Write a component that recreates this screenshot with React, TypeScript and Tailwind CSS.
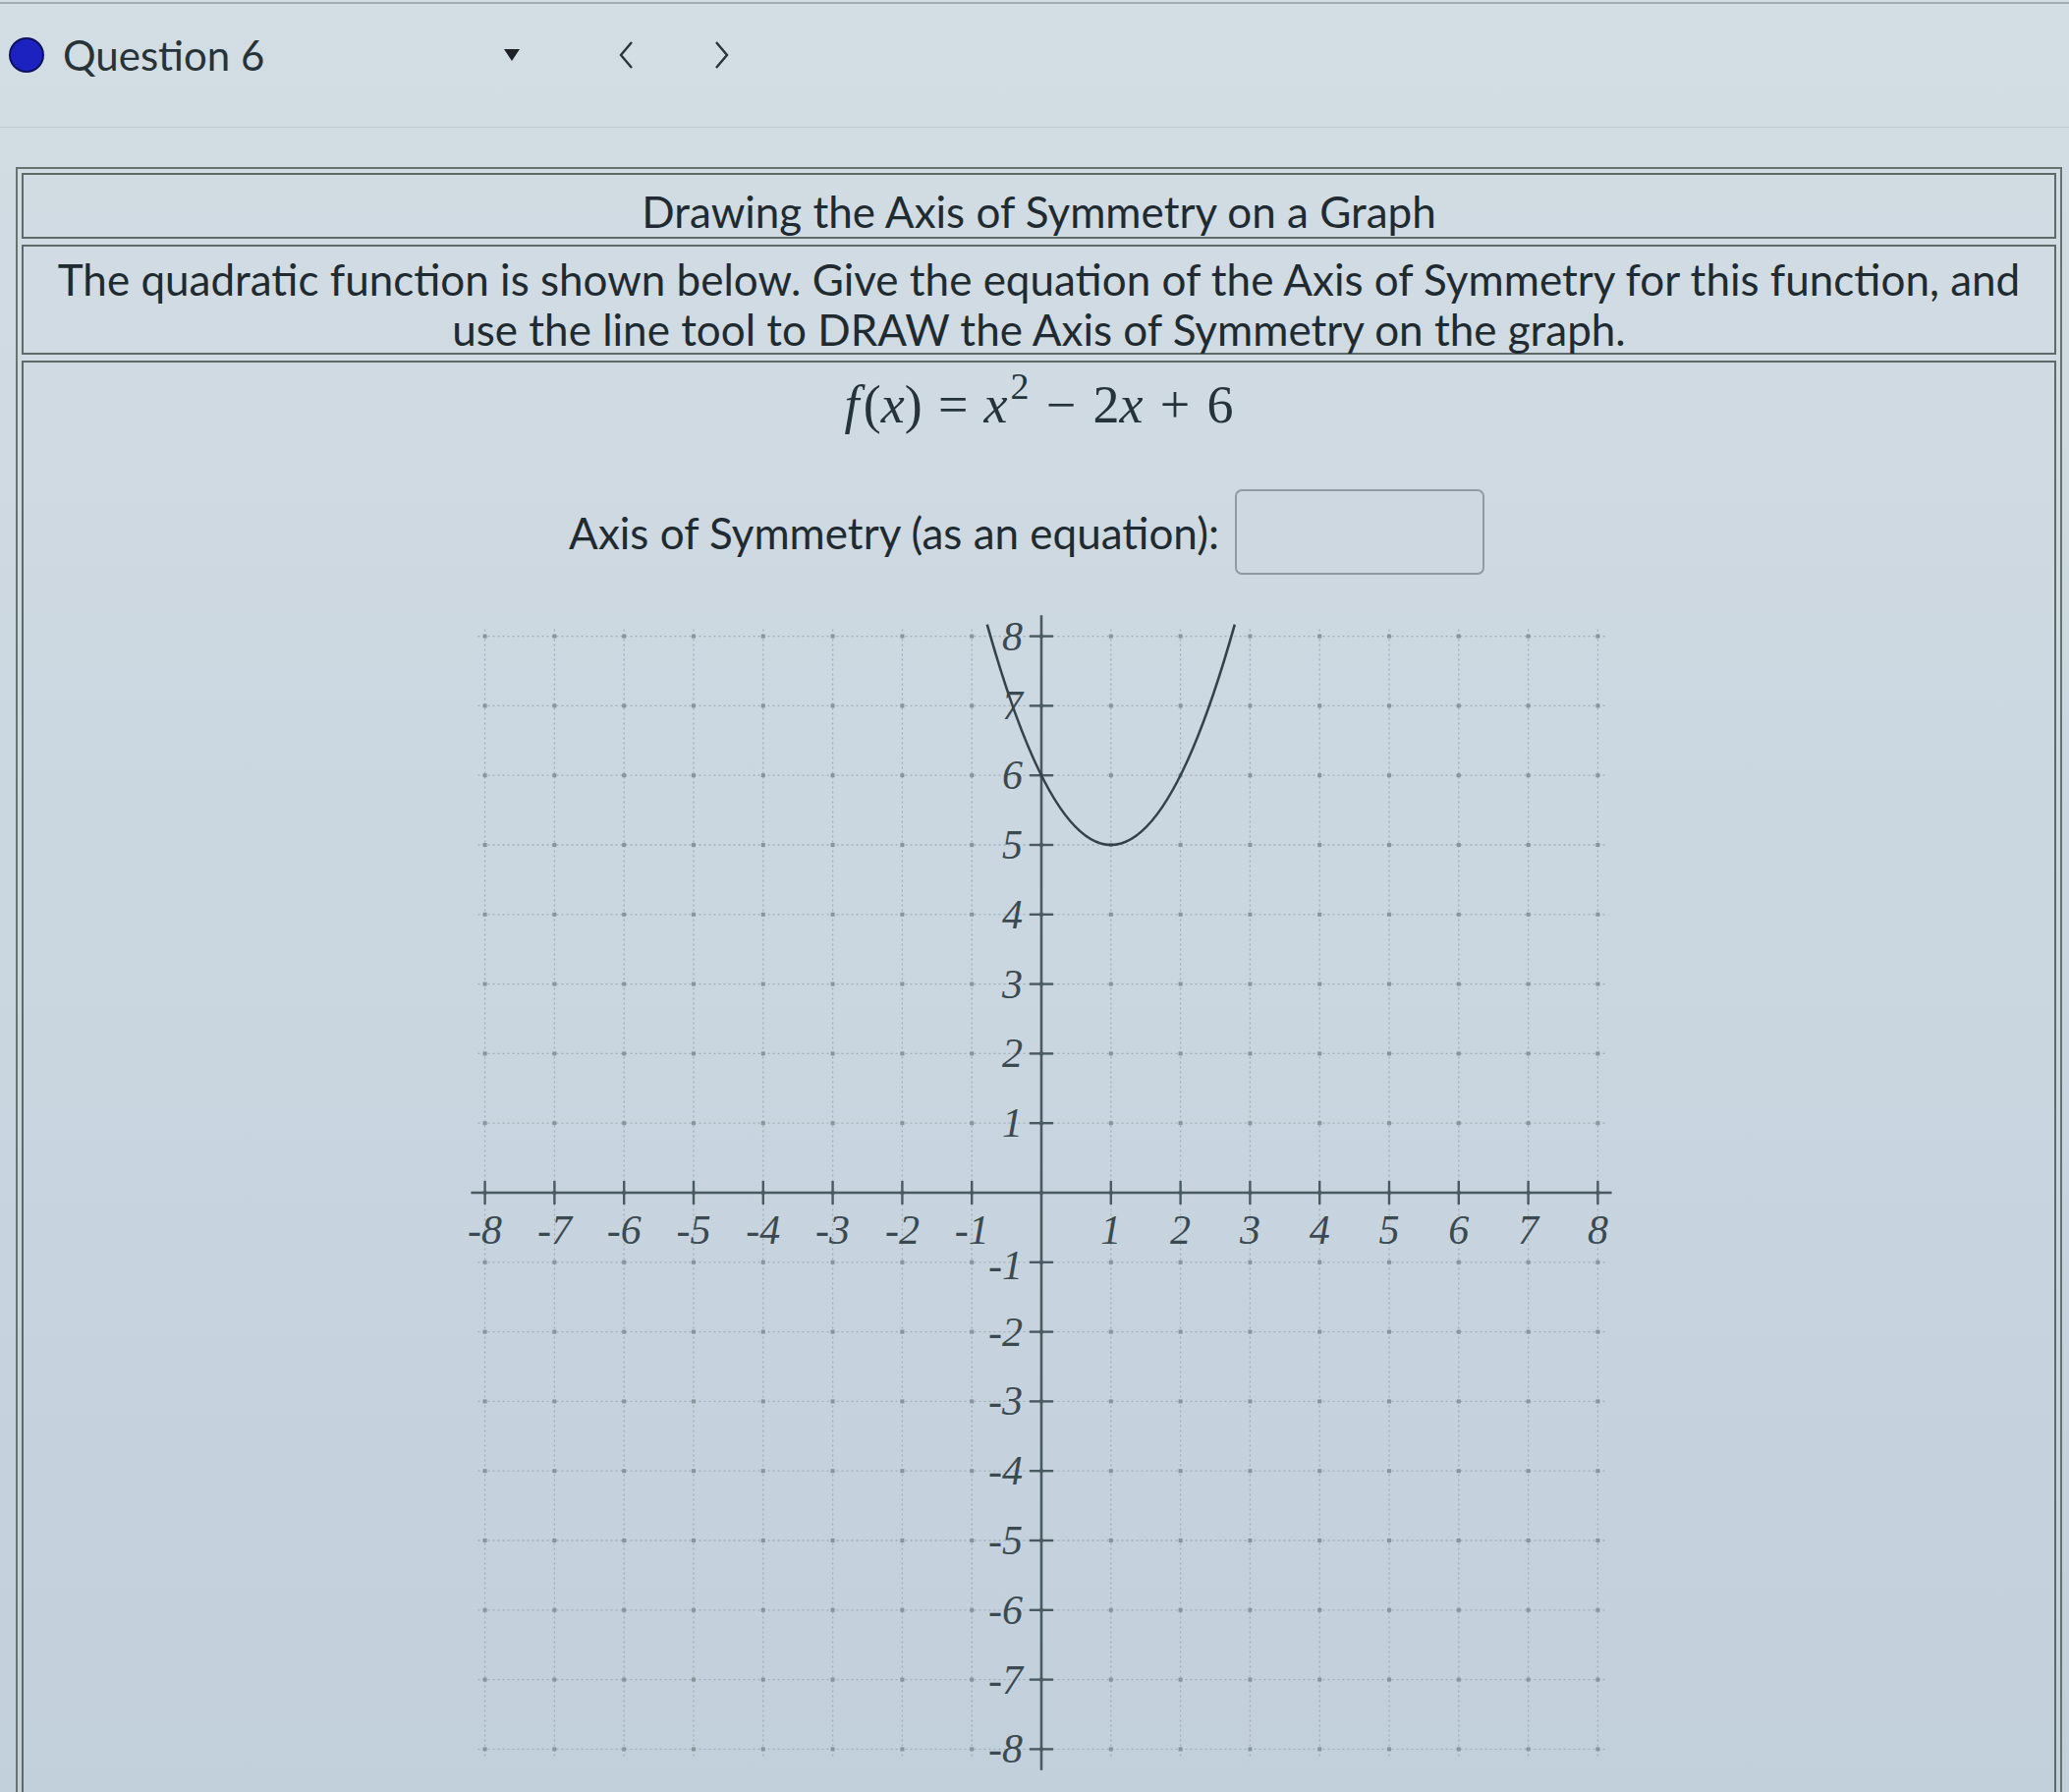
import React from "react";

// graph geometry: viewport is roughly -8.2..8.2 on both axes
const UNIT = 70.8;
const SIZE = 1240;
const O = SIZE / 2;
const sx = (x: number) => O + x * UNIT;
const sy = (y: number) => O - y * UNIT;
const f = (x: number) => x * x - 2 * x + 6;

const TICKS = [-8, -7, -6, -5, -4, -3, -2, -1, 1, 2, 3, 4, 5, 6, 7, 8];
const GRID = [-8, -7, -6, -5, -4, -3, -2, -1, 0, 1, 2, 3, 4, 5, 6, 7, 8];
const SERIF = "'Liberation Serif', 'DejaVu Serif', serif";

function Parabola() {
  // exact quadratic bezier through the clipped ends
  const x0 = -0.78;
  const x2 = 2.78;
  const x1 = (x0 + x2) / 2;
  const y1 = f(x0) + (2 * x0 - 2) * (x1 - x0);
  const d = `M ${sx(x0)} ${sy(f(x0))} Q ${sx(x1)} ${sy(y1)} ${sx(x2)} ${sy(f(x2))}`;
  return <path d={d} fill="none" stroke="#34434a" strokeWidth={2.6} />;
}

function Graph() {
  const lo = -8.1;
  const hi = 8.1;
  return (
    <svg width={SIZE} height={SIZE} viewBox={`0 0 ${SIZE} ${SIZE}`} className="block">
      {GRID.map((g) => (
        <g key={"g" + g}>
          <line x1={sx(g)} y1={sy(hi)} x2={sx(g)} y2={sy(lo)} stroke="#a3b0b9" strokeWidth={1.3} strokeDasharray="2 3" />
          <line x1={sx(lo)} y1={sy(g)} x2={sx(hi)} y2={sy(g)} stroke="#a3b0b9" strokeWidth={1.3} strokeDasharray="2 3" />
        </g>
      ))}
      {GRID.map((gx) =>
        GRID.map((gy) => (
          <rect key={`d${gx}_${gy}`} x={sx(gx) - 2} y={sy(gy) - 2} width={4} height={4} fill="#87959d" />
        )),
      )}
      {/* axes */}
      <line x1={sx(-8.2)} y1={sy(0)} x2={sx(8.2)} y2={sy(0)} stroke="#4a5a61" strokeWidth={2.6} />
      <line x1={sx(0)} y1={sy(8.3)} x2={sx(0)} y2={sy(-8.3)} stroke="#4a5a61" strokeWidth={2.6} />
      {TICKS.map((t) => (
        <g key={"t" + t}>
          <line x1={sx(t)} y1={sy(0) - 12} x2={sx(t)} y2={sy(0) + 12} stroke="#4a5a61" strokeWidth={2.4} />
          <line x1={sx(0) - 12} y1={sy(t)} x2={sx(0) + 12} y2={sy(t)} stroke="#4a5a61" strokeWidth={2.4} />
          <text x={sx(t)} y={sy(0) + 52} textAnchor="middle" fontFamily={SERIF} fontStyle="italic" fontSize={42} fill="#3b4a51">
            {t}
          </text>
          <text
            x={sx(0) - 19}
            y={sy(t) + (t === -1 ? 17 : 14)}
            textAnchor="end"
            fontFamily={SERIF}
            fontStyle="italic"
            fontSize={42}
            fill="#3b4a51"
          >
            {t}
          </text>
        </g>
      ))}
      <Parabola />
    </svg>
  );
}

function Formula() {
  return (
    <div className="flex items-baseline justify-center text-[54px] leading-[60px] text-[#26333a] font-['Liberation_Serif','DejaVu_Serif',serif]">
      <span className="italic">f</span>
      <span className="ml-[0.08em]">(</span>
      <span className="italic">x</span>
      <span>)</span>
      <span className="mx-[0.3em]">=</span>
      <span className="italic">x</span>
      <span className="relative -top-[0.62em] ml-[3px] text-[38px]">2</span>
      <span className="mx-[0.32em]">−</span>
      <span>2</span>
      <span className="italic">x</span>
      <span className="mx-[0.32em]">+</span>
      <span>6</span>
    </div>
  );
}

export default function App() {
  return (
    <div className="h-[1824px] w-[2106px] overflow-hidden bg-gradient-to-b from-[#d3dde4] to-[#c2d0dc] text-[#1f2b31] font-['Lato','Open_Sans',sans-serif]">
      <div className="h-[4px] border-b-2 border-[#a3aeb4]" />
      {/* question nav */}
      <div className="flex h-[104px] items-center">
        <div className="ml-[11px] h-[32px] w-[32px] rounded-full bg-[#1b22c0] ring-2 ring-[#0d1260]" />
        <span className="ml-[21px] text-[42px] leading-none text-[#283338]">Question 6</span>
        <svg width="18" height="14" viewBox="0 0 18 14" className="ml-[243px]">
          <polygon points="1,1 17,1 9,13" fill="#1c2226" />
        </svg>
        <svg width="18" height="30" viewBox="0 0 18 30" className="ml-[98px]">
          <polyline points="15,2 4,15 15,28" fill="none" stroke="#2a3338" strokeWidth="2.4" />
        </svg>
        <svg width="18" height="30" viewBox="0 0 18 30" className="ml-[80px]">
          <polyline points="3,2 14,15 3,28" fill="none" stroke="#2a3338" strokeWidth="2.4" />
        </svg>
      </div>
      <div className="h-[22px] border-b border-[#c0cad1]" />

      <div className="ml-[16px] mr-[7px] mt-[40px] flex h-[1700px] flex-col gap-[6px] border-2 border-[#66736f] p-[4px]">
        <div className="flex h-[67px] shrink-0 items-center justify-center border-2 border-[#5d6a68] pt-[10px]">
          <span className="text-[44px] leading-none">Drawing the Axis of Symmetry on a Graph</span>
        </div>
        <div className="flex h-[112px] shrink-0 items-center justify-center border-2 border-[#5d6a68] px-[20px] pt-[10px] text-center">
          <p className="text-[44px] leading-[51px]">
            The quadratic function is shown below. Give the equation of the Axis of Symmetry for this function, and
            <br />
            use the line tool to DRAW the Axis of Symmetry on the graph.
          </p>
        </div>
        <div className="flex flex-1 flex-col items-center border-2 border-[#5d6a68] pt-[13px]">
          <Formula />
          <div className="mt-[51px] flex items-center gap-[16px] pr-[25px]">
            <span className="text-[44px] leading-none">Axis of Symmetry (as an equation):</span>
            <div className="h-[87px] w-[254px] rounded-[7px] border-2 border-[#8f9ba1] bg-[#cdd8e1]" />
          </div>
          <div className="mt-[9px] pl-[5px]">
            <Graph />
          </div>
        </div>
      </div>
    </div>
  );
}
